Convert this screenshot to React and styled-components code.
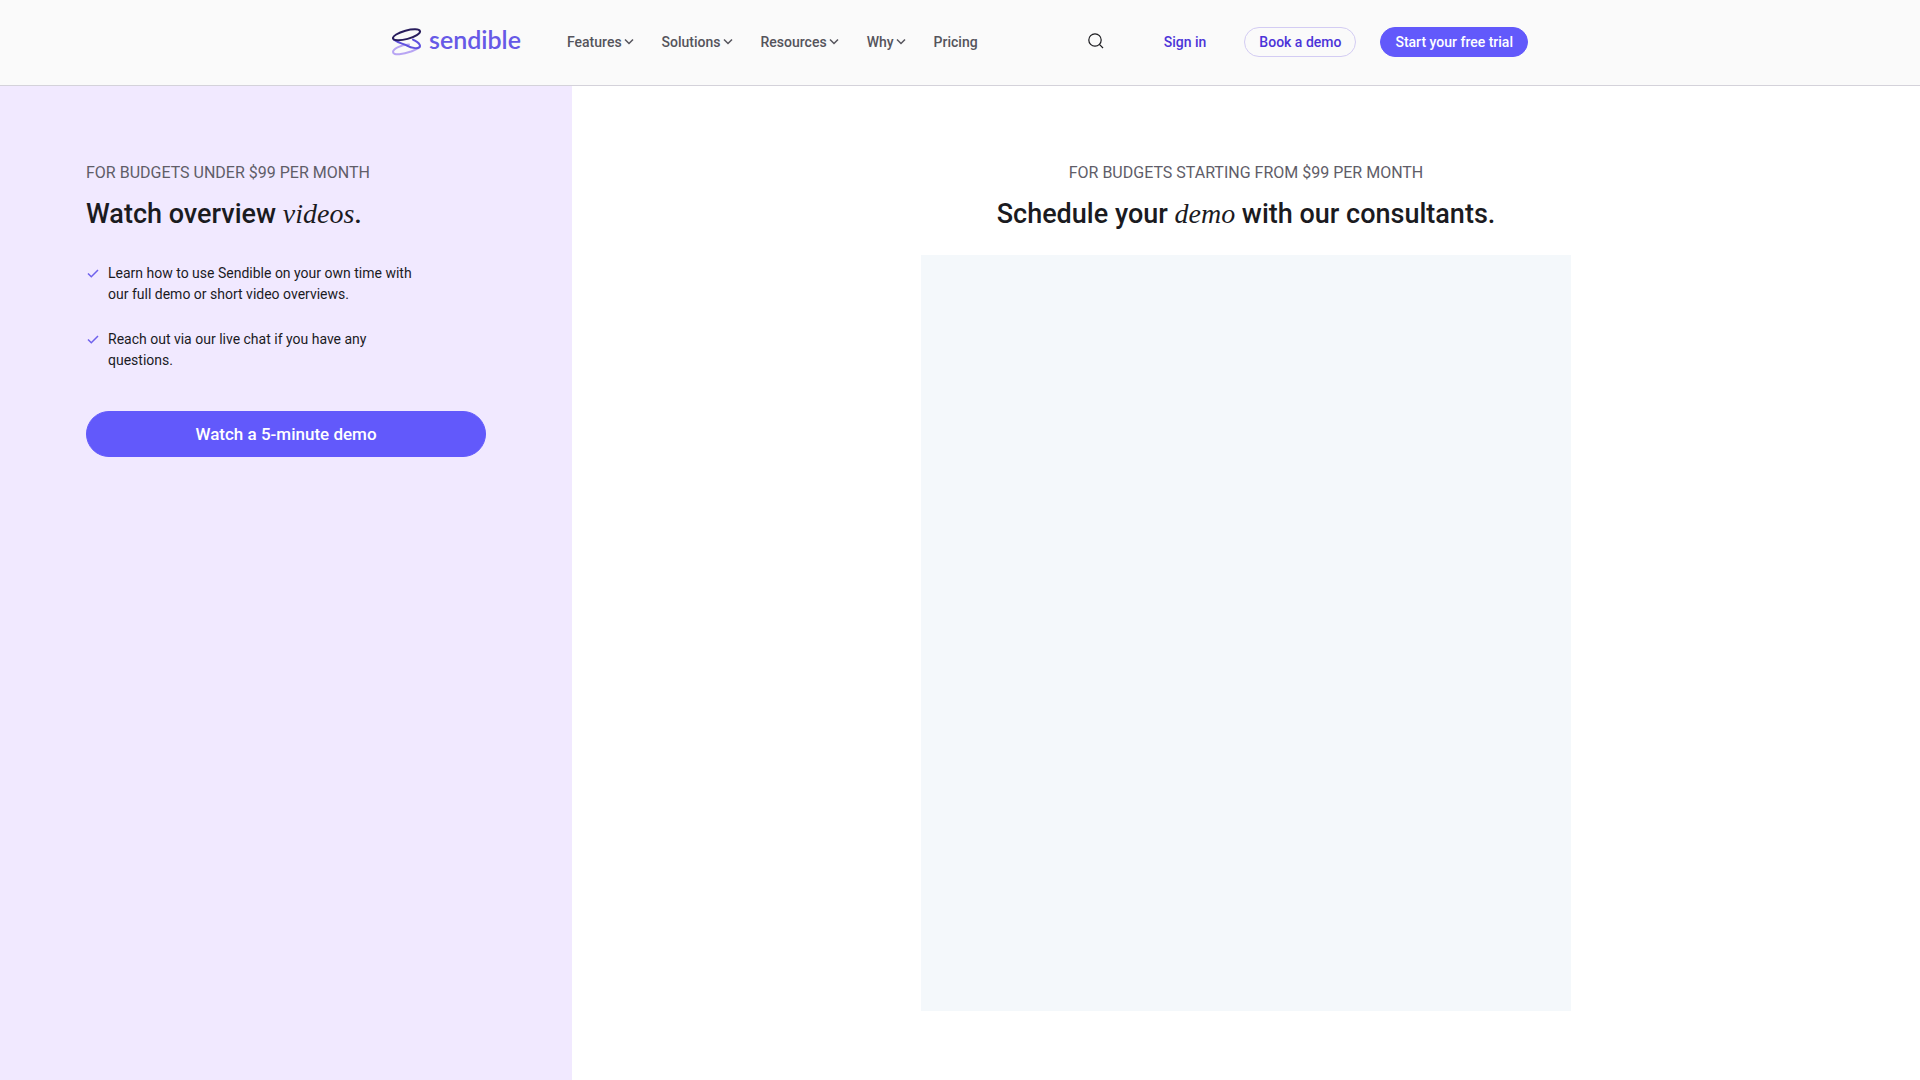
import React from 'react'
import styled, { createGlobalStyle } from 'styled-components';

const GlobalStyle = createGlobalStyle`
  * {
    box-sizing: border-box;
  }

  body {
    margin: 0;
    background-color: #fff;
    color: #1b1b1f;
    font-family: Roboto, sans-serif;
    font-size: 14px;
    line-height: 21px;
  }

  a {
    color: inherit;
    text-decoration: none;
  }
`;
const Page = styled.div`
  min-height: 100vh;
  display: flex;
  flex-direction: column;
`;
const Header = styled.header`
  background-color: #fafafa;
  border-bottom: 1px solid #d4d2da;
`;
const HeaderInner = styled.div`
  max-width: 1136px;
  height: 85px;
  margin: 0 auto;
  padding-bottom: 1px;
  display: flex;
  align-items: center;
`;
const LogoLink = styled.a`
  display: flex;
  margin-right: 45px;
`;
const Nav = styled.nav`
  display: flex;
  align-items: center;
  gap: 28px;
`;
const NavButton = styled.button`
  display: flex;
  align-items: center;
  gap: 2px;
  padding: 0;
  border: 0;
  background: none;
  color: #55545c;
  font-family: inherit;
  font-size: 14px;
  font-weight: 500;
  line-height: 21px;
  cursor: pointer;

  &:hover {
    color: #4c34d8;
  }
`;
const Actions = styled.div`
  display: flex;
  align-items: center;
  margin-left: auto;
`;
const SearchButton = styled.button`
  display: flex;
  padding: 0;
  margin-right: 60px;
  border: 0;
  background: none;
  color: #1b1b1f;
  cursor: pointer;
`;
const SignIn = styled.a`
  margin-right: 38px;
  color: #4c34d8;
  font-weight: 500;
`;
const PillLink = styled.a`
  display: flex;
  align-items: center;
  justify-content: center;
  height: ${(props) => (props.$large ? '46px' : '30px')};
  padding: 0 14px;
  border: 1px solid ${(props) => (props.$outline ? '#d3ccf3' : '#6259fb')};
  border-radius: 23px;
  background-color: ${(props) => (props.$outline ? 'transparent' : '#6259fb')};
  color: ${(props) => (props.$outline ? '#4c34d8' : '#fff')};
  font-size: ${(props) => (props.$large ? '17px' : '14px')};
  font-weight: 500;

  & + & {
    margin-left: 24px;
  }
`;
const Main = styled.main`
  flex: 1;
  display: flex;
`;
const VideoPanel = styled.section`
  flex: none;
  padding: 75px 86px;
  background-color: #f1e9ff;
`;
const PanelBody = styled.div`
  width: 400px;
`;
const DemoPanel = styled.section`
  flex: 1;
  display: flex;
  flex-direction: column;
  align-items: center;
  padding: 75px 24px 69px;
`;
const Eyebrow = styled.p`
  margin: 0;
  color: #605d68;
  font-size: 16px;
  line-height: 24px;
`;
const Title = styled.h2`
  margin: 11px 0 0;
  font-size: 27px;
  font-weight: 500;
  line-height: 36px;

  em {
    font-family: 'Liberation Serif', serif;
    font-size: 28px;
    font-weight: 400;
    line-height: 28px;
  }
`;
const CheckList = styled.ul`
  display: flex;
  flex-direction: column;
  gap: 24px;
  max-width: 340px;
  margin: 31px 0 40px;
  padding: 0;
  list-style: none;
`;
const CheckItem = styled.li`
  display: flex;
  gap: 8px;

  svg {
    flex: none;
    margin-top: 3px;
  }
`;
const FormArea = styled.div`
  flex: 1;
  width: 100%;
  max-width: 650px;
  margin-top: 23px;
  background-color: #f4f8fb;
`;

const Logo = () => (
  <svg width="130" height="34" viewBox="0 0 130 34" role="img" aria-label="sendible">
    <g fill="none" strokeWidth="2" strokeLinecap="round">
      <path d="M17 19.600 C8 20 1 24 1 27 C1 31 12 29 19 26.500 C24 24.500 27.500 23.500 28 21" stroke="#b8a5f3" />
      <path d="M2 14.800 C6 18 11 18.500 15 20.600 C19 23.300 28 24.500 28 21 C28 18 24 16.500 21 14.600" stroke="#5f52de" />
      <ellipse cx="14.500" cy="9.800" rx="14" ry="4.200" transform="rotate(-15 14.500 9.800)" stroke="#281c5c" />
    </g>
    <text x="37" y="24" fill="#6659e6" fontFamily="Lato" fontSize="25" fontWeight="600">sendible</text>
  </svg>
)
const Chevron = () => (
  <svg width="10" height="10" viewBox="0 0 10 10" fill="none" stroke="currentColor" strokeWidth="1.5">
    <path d="M1 2.500 L5 6.500 L9 2.500" />
  </svg>
)
const SearchIcon = () => (
  <svg width="16" height="18" viewBox="0 0 16 18" fill="none" stroke="currentColor" strokeWidth="1.2">
    <circle cx="7" cy="7" r="6.200" />
    <path d="M11.400 11.400 L15 15" />
  </svg>
)
const Check = () => (
  <svg width="14" height="14" viewBox="0 0 14 14" fill="none" stroke="#6f61ec" strokeWidth="1.5">
    <path d="M2 7.500 L5.300 10.800 L12 4" />
  </svg>
)

const menus = ['Features', 'Solutions', 'Resources', 'Why'];
const points = [
  'Learn how to use Sendible on your own time with our full demo or short video overviews.',
  'Reach out via our live chat if you have any questions.',
];

const App = () => {
  return (
    <Page>
      <GlobalStyle />
      <Header>
        <HeaderInner>
          <LogoLink href="#"><Logo /></LogoLink>
          <Nav>
            {menus.map((name) => (
              <NavButton key={name}>{name}<Chevron /></NavButton>
            ))}
            <NavButton as="a" href="#">Pricing</NavButton>
          </Nav>
          <Actions>
            <SearchButton aria-label="Search"><SearchIcon /></SearchButton>
            <SignIn href="#">Sign in</SignIn>
            <PillLink href="#" $outline>Book a demo</PillLink>
            <PillLink href="#">Start your free trial</PillLink>
          </Actions>
        </HeaderInner>
      </Header>
      <Main>
        <VideoPanel>
          <PanelBody>
            <Eyebrow>FOR BUDGETS UNDER $99 PER MONTH</Eyebrow>
            <Title>Watch overview <em>videos</em>.</Title>
            <CheckList>
              {points.map((point) => (
                <CheckItem key={point}><Check /><span>{point}</span></CheckItem>
              ))}
            </CheckList>
            <PillLink href="#" $large>Watch a 5-minute demo</PillLink>
          </PanelBody>
        </VideoPanel>
        <DemoPanel>
          <Eyebrow>FOR BUDGETS STARTING FROM $99 PER MONTH</Eyebrow>
          <Title>Schedule your <em>demo</em> with our consultants.</Title>
          <FormArea />
        </DemoPanel>
      </Main>
    </Page>
  )
}

export default App
